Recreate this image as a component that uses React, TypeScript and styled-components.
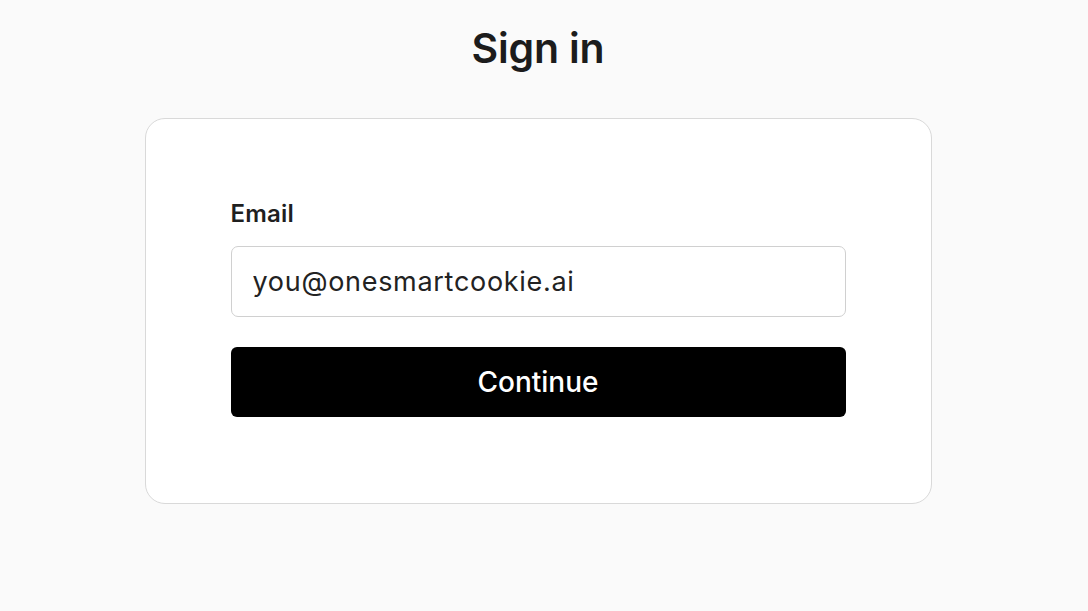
import React from 'react';
import styled, {createGlobalStyle} from "styled-components";

const GlobalStyle = createGlobalStyle`
  html, body {
    margin: 0;
    padding: 0;
    background: #fafafa;
    font-family: Inter, "Noto Sans", sans-serif;
    color: #1f1f1f;
  }
  * {
    box-sizing: border-box;
  }
`

export default function App() {
    return (
        <>
            <GlobalStyle/>
            <StyledPage>
                <Title>Sign in</Title>
                <Card>
                    <Form onSubmit={e => e.preventDefault()}>
                        <Label htmlFor="email">Email</Label>
                        <Input id="email" type="email" defaultValue="you@onesmartcookie.ai"/>
                        <Button type="submit">Continue</Button>
                    </Form>
                </Card>
            </StyledPage>
        </>
    );
}

const StyledPage = styled.main`
  min-height: 611px;
  display: flex;
  flex-direction: column;
  align-items: center;
  padding: 22px 12px 0 0;
`

const Title = styled.h1`
  margin: 0;
  font-size: 41px;
  font-weight: 600;
  line-height: 52px;
  letter-spacing: -0.2px;
  color: #1c1c1c;
`

const Card = styled.section`
  margin-top: 44px;
  width: 787px;
  height: 386px;
  background: #fff;
  border: 1.5px solid #d9d9d9;
  border-radius: 20px;
  padding: 80px 85px 0 85px;
`

const Form = styled.form`
  display: flex;
  flex-direction: column;
`

const Label = styled.label`
  font-size: 24px;
  font-weight: 600;
  line-height: 30px;
  letter-spacing: 0.2px;
  color: #1f1f1f;
`

const Input = styled.input`
  margin-top: 17px;
  height: 71px;
  width: 100%;
  border: 1.5px solid #d0d0d0;
  border-radius: 7px;
  padding: 0 21px;
  font-family: Inter, "Noto Sans", sans-serif;
  font-size: 27px;
  letter-spacing: 0.7px;
  color: #222;
  background: #fff;
  outline: none;
`

const Button = styled.button`
  margin-top: 30px;
  height: 70px;
  width: 100%;
  border: none;
  border-radius: 6px;
  background: #000;
  color: #fff;
  font-family: Inter, "Noto Sans", sans-serif;
  font-size: 28px;
  font-weight: 500;
  cursor: pointer;
`
